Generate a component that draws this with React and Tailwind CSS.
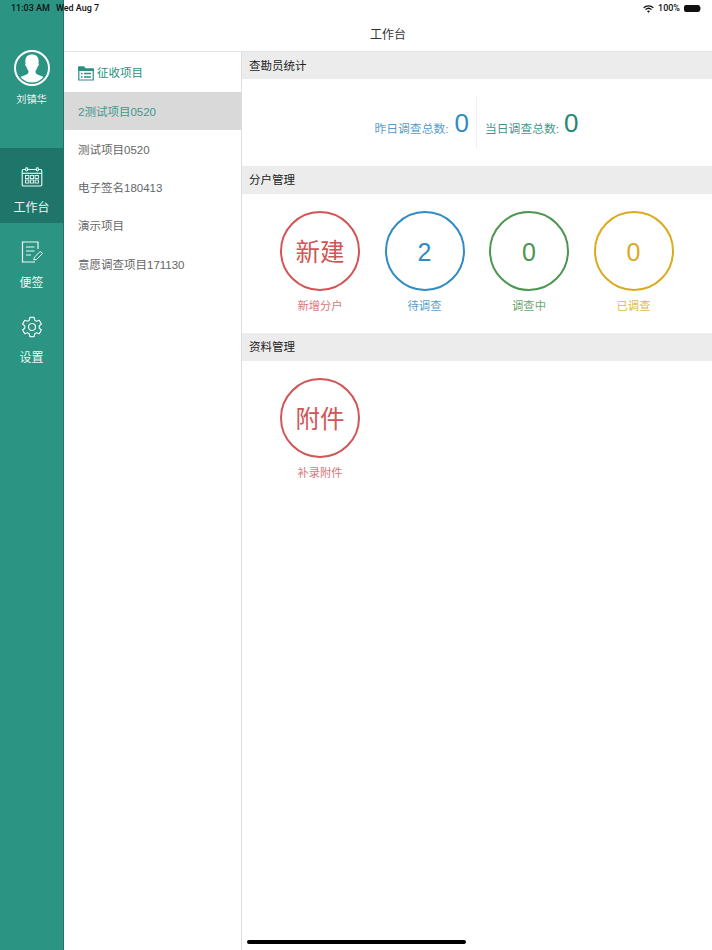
import React from "react";

const font = { fontFamily: '"Liberation Sans", "Noto Sans CJK SC", sans-serif' };

function Avatar() {
  return (
    <svg width="36" height="36" viewBox="0 0 36 36" className="block">
      <circle cx="18" cy="18" r="17" fill="none" stroke="#fff" strokeWidth="2" />
      <clipPath id="av"><circle cx="18" cy="18" r="14.600" /></clipPath>
      <g clipPath="url(#av)" fill="#fff">
        <path d="M18 4.500c-4.800 0-7 3.200-6.600 7.500.1 1 .1 1.700-.1 2.300-.2.900.3 1.800.9 2 .5 2 1.300 3.300 2.100 4.200.4 1.700 0 3-1.200 3.700-2 1.100-5.300 1.900-7.500 3.300V36h24.800v-8.500c-2.200-1.400-5.500-2.200-7.500-3.300-1.200-.7-1.600-2-1.200-3.700.8-.9 1.600-2.200 2.100-4.200.6-.2 1.100-1.100.9-2-.2-.6-.2-1.300-.1-2.300.4-4.300-1.800-7.500-6.600-7.500z" />
      </g>
    </svg>
  );
}

function CalendarIcon() {
  return (
    <svg width="22" height="20" viewBox="0 0 22 20" fill="none" stroke="#f2f8f7" strokeWidth="1.100">
      <rect x="1.200" y="2.500" width="19.600" height="16.500" rx="1.200" />
      <path d="M1.200 6.300h19.600" />
      <rect x="4.700" y="0.800" width="2" height="3.200" rx="0.900" fill="#20756a" />
      <rect x="15.300" y="0.800" width="2" height="3.200" rx="0.900" fill="#20756a" />
      <g strokeWidth="0.900">
        <rect x="4.500" y="8.500" width="3.300" height="3" />
        <rect x="9.300" y="8.500" width="3.300" height="3" />
        <rect x="14.100" y="8.500" width="3.300" height="3" />
        <rect x="4.500" y="13" width="3.300" height="3" />
        <rect x="9.300" y="13" width="3.300" height="3" />
        <rect x="14.100" y="13" width="3.300" height="3" />
      </g>
    </svg>
  );
}

function NoteIcon() {
  return (
    <svg width="22" height="22" viewBox="0 0 22 22" fill="none" stroke="#f2f8f7" strokeWidth="1.200">
      <path d="M17 8V1H1.500v20H14" />
      <path d="M5 6h8.500M5 10h8.500M5 14h5" />
      <path d="M12.800 19l.6-2.800 5.800-5.800 2.200 2.200-5.800 5.800z" strokeWidth="1" />
    </svg>
  );
}

function GearIcon() {
  return (
    <svg width="22" height="22" viewBox="0 0 24 24" fill="none" stroke="#f2f8f7" strokeWidth="1.300" strokeLinejoin="round">
      <path d="M9.700 1.500h4.600l.7 3.100 1.900 1.100 3-1 2.300 4-2.300 2.100v2.400l2.300 2.100-2.300 4-3-1-1.900 1.100-.7 3.100H9.700L9 19.400l-1.900-1.100-3 1-2.300-4L4.100 13.200v-2.400L1.800 8.700l2.300-4 3 1L9 4.600z" />
      <circle cx="12" cy="12" r="3.800" />
    </svg>
  );
}

function FolderIcon() {
  return (
    <svg width="16" height="15" viewBox="0 0 16 15" fill="none" stroke="#2a9080" strokeWidth="1.200">
      <path d="M.8 14V1h5l1.500 2h7.900v11z" fill="#fff" />
      <path d="M.8 1h5l1.500 2h7.900v1.500H.8z" fill="#2a9080" />
      <path d="M3 7.500h1.500M3 11h1.500M6 7.500h7M6 11h7" strokeWidth="1.400" />
    </svg>
  );
}

function NavItem({ icon, label, active }) {
  return (
    <div className={`flex h-[75px] flex-col items-center pt-[18px] ${active ? "bg-[#20756a]" : ""}`}>
      <div className="flex h-[22px] items-center justify-center">{icon}</div>
      <div className="mt-[12px] text-[12px] leading-[16px] text-[#eef6f4]">{label}</div>
    </div>
  );
}

function SectionHeader({ children, className }) {
  return (
    <div className={`flex items-center bg-[#ececec] pl-[7px] text-[11.500px] text-[#222] ${className || "h-[28px]"}`}>
      <span className="pt-[2px]">{children}</span>
    </div>
  );
}

function Circle({ value, label, ring, text, labelColor, big }) {
  return (
    <div className="flex w-[80px] flex-col items-center">
      <div className={`flex h-[80px] w-[80px] items-center justify-center rounded-full border-[2px] pt-[4px] ${ring} ${text} ${big ? "text-[24.500px]" : "text-[25px]"}`}>
        {value}
      </div>
      <div className={`mt-[7px] text-[11.300px] leading-[16px] ${labelColor}`}>{label}</div>
    </div>
  );
}

const projects = ["2测试项目0520", "测试项目0520", "电子签名180413", "演示项目", "意愿调查项目171130"];

export default function App() {
  return (
    <div className="relative flex h-[950px] w-[712px] overflow-hidden bg-white" style={font}>
      <aside className="flex w-[64px] shrink-0 flex-col border-r border-[#1f7468] bg-[#2b9482]">
        <div className="flex h-[148px] flex-col items-center pt-[50px]">
          <Avatar />
          <div className="mt-[6px] text-[10.200px] leading-[16px] text-[#e8f3f1]">刘镇华</div>
        </div>
        <NavItem active icon={<CalendarIcon />} label="工作台" />
        <NavItem icon={<NoteIcon />} label="便签" />
        <NavItem icon={<GearIcon />} label="设置" />
      </aside>

      <div className="flex min-w-0 flex-1 flex-col">
        <header className="flex h-[52px] shrink-0 items-end justify-center border-b border-[#e3e3e3] pb-[7px] text-[12px] leading-[18px] text-[#333]">
          工作台
        </header>
        <div className="flex flex-1">
          <nav className="w-[178px] shrink-0 border-r border-[#dedede]">
            <div className="flex h-[40px] items-center gap-[3px] pl-[14px] pt-[2px] text-[11.500px] text-[#2a9080]">
              <FolderIcon />
              <span className="pt-[2px]">征收项目</span>
            </div>
            {projects.map((p, i) => (
              <div
                key={p}
                className={`flex h-[38.300px] items-center pl-[14px] pt-[2px] text-[11.500px] ${i === 0 ? "bg-[#d9d9d9] text-[#44988a]" : "text-[#666]"}`}
              >
                {p}
              </div>
            ))}
          </nav>

          <main className="min-w-0 flex-1">
            <SectionHeader className="h-[27px]">查勘员统计</SectionHeader>
            <div className="flex h-[87px] items-center justify-center">
              <div className="flex h-[52px] w-[103px] items-center justify-end gap-[6px] whitespace-nowrap border-r border-[#f0f0f0] pr-[7px]">
                <span className="pt-[14px] text-[11.800px] text-[#5a9cc8]">昨日调查总数:</span>
                <span className="text-[26px] leading-[30px] text-[#2f8cc4]">0</span>
              </div>
              <div className="flex h-[52px] w-[103px] items-center gap-[5px] whitespace-nowrap pl-[8px]">
                <span className="pt-[14px] text-[11.800px] text-[#44988a]">当日调查总数:</span>
                <span className="text-[26px] leading-[30px] text-[#25867a]">0</span>
              </div>
            </div>
            <SectionHeader>分户管理</SectionHeader>
            <div className="flex h-[139px] gap-[24.500px] pl-[38px] pt-[17px]">
              <Circle big value="新建" label="新增分户" ring="border-[#d25557]" text="text-[#d25557]" labelColor="text-[#d9777a]" />
              <Circle value="2" label="待调查" ring="border-[#2f8cc4]" text="text-[#2f8cc4]" labelColor="text-[#5a9fcb]" />
              <Circle value="0" label="调查中" ring="border-[#4c9650]" text="text-[#4c9650]" labelColor="text-[#6da570]" />
              <Circle value="0" label="已调查" ring="border-[#dcaa1e]" text="text-[#dcaa1e]" labelColor="text-[#dcb94a]" />
            </div>
            <SectionHeader>资料管理</SectionHeader>
            <div className="flex pl-[38px] pt-[17px]">
              <Circle big value="附件" label="补录附件" ring="border-[#d25557]" text="text-[#d25557]" labelColor="text-[#d9777a]" />
            </div>
          </main>
        </div>
      </div>

      <div className="absolute left-0 right-0 top-0 flex h-[17px] items-center justify-between pl-[11px] pr-[11px] text-[9px] font-medium text-[#111]" style={{ fontFamily: "Roboto, sans-serif" }}>
        <div className="flex gap-[8px]">
          <span>11:03 AM</span>
          <span className="-ml-[2px]">Wed Aug 7</span>
        </div>
        <div className="flex items-center gap-[3px]">
          <svg width="11" height="8" viewBox="0 0 12 9" fill="none" stroke="#111" strokeWidth="1.500">
            <path d="M.6 3.200a7.800 7.800 0 0 1 10.800 0M2.600 5.200a5 5 0 0 1 6.800 0" />
            <path d="M6 8.800 4.300 7a2.500 2.500 0 0 1 3.400 0z" fill="#111" stroke="none" />
          </svg>
          <span className="ml-[1px]">100%</span>
          <span className="ml-[1px] block h-[7px] w-[16px] rounded-[2px] bg-[#111]" />
          <span className="-ml-[3px] block h-[3px] w-[1px] bg-[#999]" />
        </div>
      </div>
      <div className="absolute left-[247px] top-[940px] h-[4px] w-[219px] rounded-full bg-black" />
    </div>
  );
}
